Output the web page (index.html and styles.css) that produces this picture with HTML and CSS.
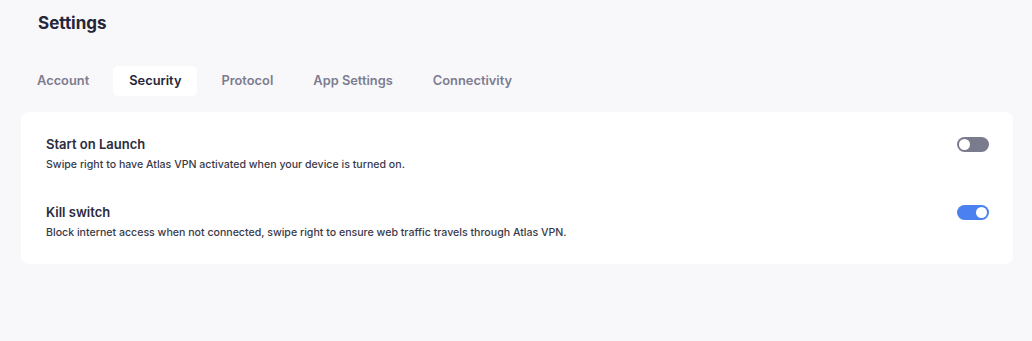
FILE: index.html
```html
<!DOCTYPE html>
<html lang="en">
<head>
    <meta charset="UTF-8">
    <meta name="viewport" content="width=device-width, initial-scale=1.0">
    <title>Settings</title>
    <link rel="stylesheet" href="styles.css">
</head>
<body>

<div class="settings-page">
    <h1 class="page-title">Settings</h1>

    <nav class="tabs">
        <a class="tab">Account</a>
        <a class="tab active">Security</a>
        <a class="tab">Protocol</a>
        <a class="tab">App Settings</a>
        <a class="tab">Connectivity</a>
    </nav>

    <div class="settings-card">
        <div class="setting-row">
            <div class="setting-text">
                <div class="setting-title">Start on Launch</div>
                <div class="setting-desc">Swipe right to have Atlas VPN activated when your device is turned on.</div>
            </div>
            <span class="toggle"></span>
        </div>
        <div class="setting-row">
            <div class="setting-text">
                <div class="setting-title">Kill switch</div>
                <div class="setting-desc">Block internet access when not connected, swipe right to ensure web traffic travels through Atlas VPN.</div>
            </div>
            <span class="toggle on"></span>
        </div>
    </div>
</div>

</body>
</html>
```

FILE: styles.css
```css
body {
    font-family: 'Inter', sans-serif;
    margin: 0;
    padding: 0;
    background-color: #f8f8fb;
    color: #2b2b40;
}
.settings-page {
    padding: 13px 19px 0 21px;
}
.page-title {
    margin: 0 0 33px 17px;
    font-size: 17px;
    line-height: 20px;
    font-weight: 700;
    color: #262639;
}
.tabs {
    display: flex;
    gap: 8px;
}
.tab {
    padding: 0 16px;
    height: 30px;
    line-height: 30px;
    font-size: 12.85px;
    font-weight: 600;
    color: #7c7c8f;
    border-radius: 5px;
}
.tab.active {
    background-color: #fff;
    color: #262639;
}
.settings-card {
    margin-top: 16px;
    padding: 8px 24px 8px 25px;
    background-color: #fff;
    border-radius: 8px;
}
.setting-row {
    display: flex;
    justify-content: space-between;
    align-items: flex-start;
    padding: 15px 0;
}
.setting-title {
    font-size: 13px;
    line-height: 18px;
    font-weight: 600;
    color: #2b2b3d;
}
.setting-desc {
    margin-top: 4px;
    font-size: 10.6px;
    line-height: 16px;
    font-weight: 500;
    color: #3a3a4a;
}
.toggle {
    position: relative;
    width: 32px;
    height: 15px;
    margin-top: 2px;
    border-radius: 8px;
    background-color: #7b7b8e;
}
.toggle::after {
    content: "";
    position: absolute;
    top: 2px;
    left: 2px;
    width: 11px;
    height: 11px;
    border-radius: 50%;
    background-color: #fff;
}
.toggle.on {
    background-color: #4a80f0;
}
.toggle.on::after {
    left: 19px;
}
```
